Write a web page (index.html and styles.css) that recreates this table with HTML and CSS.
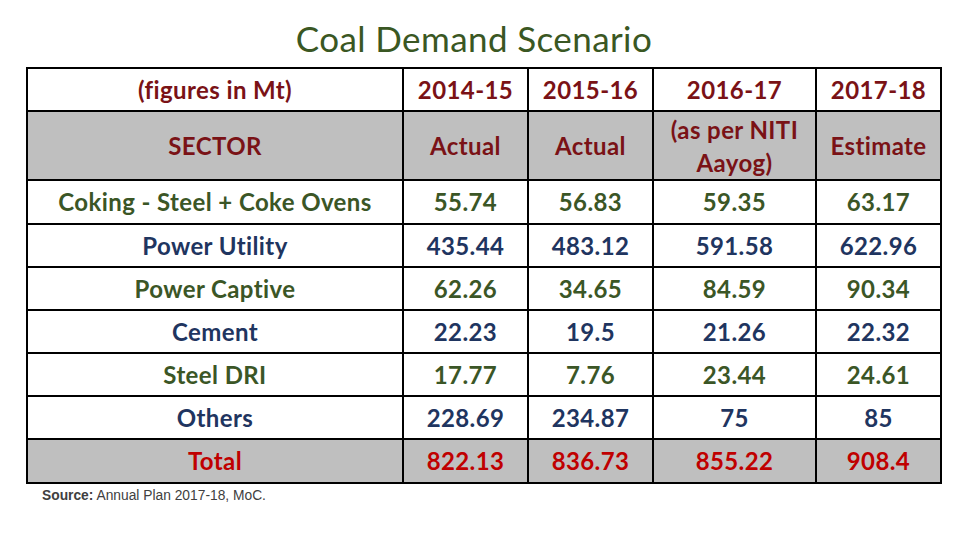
FILE: index.html
```html
<!DOCTYPE html>
<html>
<head>
<meta charset="utf-8">
<link rel="stylesheet" href="styles.css">
</head>
<body>
<div class="slide">
  <h1 class="title">Coal Demand Scenario</h1>
  <table class="demand">
    <tr class="r-year">
      <td class="sector">(figures in Mt)</td>
      <td>2014-15</td>
      <td>2015-16</td>
      <td>2016-17</td>
      <td>2017-18</td>
    </tr>
    <tr class="r-head">
      <td class="sector">SECTOR</td>
      <td>Actual</td>
      <td>Actual</td>
      <td class="two">(as per NITI<br>Aayog)</td>
      <td>Estimate</td>
    </tr>
    <tr class="r-green r-first">
      <td class="sector">Coking - Steel + Coke Ovens</td>
      <td>55.74</td><td>56.83</td><td>59.35</td><td>63.17</td>
    </tr>
    <tr class="r-navy">
      <td class="sector">Power Utility</td>
      <td>435.44</td><td>483.12</td><td>591.58</td><td>622.96</td>
    </tr>
    <tr class="r-green">
      <td class="sector">Power Captive</td>
      <td>62.26</td><td>34.65</td><td>84.59</td><td>90.34</td>
    </tr>
    <tr class="r-navy">
      <td class="sector">Cement</td>
      <td>22.23</td><td>19.5</td><td>21.26</td><td>22.32</td>
    </tr>
    <tr class="r-green">
      <td class="sector">Steel DRI</td>
      <td>17.77</td><td>7.76</td><td>23.44</td><td>24.61</td>
    </tr>
    <tr class="r-navy">
      <td class="sector">Others</td>
      <td>228.69</td><td>234.87</td><td>75</td><td>85</td>
    </tr>
    <tr class="r-total">
      <td class="sector">Total</td>
      <td>822.13</td><td>836.73</td><td>855.22</td><td>908.4</td>
    </tr>
  </table>
  <p class="source"><b>Source:</b> Annual Plan 2017-18, MoC.</p>
</div>
</body>
</html>
```

FILE: styles.css
```css
html, body {
  margin: 0;
  padding: 0;
  background: #ffffff;
}

.slide {
  width: 960px;
  height: 540px;
  padding: 0 0 0 26px;
  box-sizing: border-box;
}

.title {
  margin: 0;
  height: 67px;
  width: 896px;
  box-sizing: border-box;
  padding-top: 20px;
  text-align: center;
  font-family: Lato, "Liberation Sans", sans-serif;
  font-weight: 400;
  font-size: 35px;
  line-height: 36px;
  color: #3a5723;
  letter-spacing: 0.4px;
}

.demand {
  border-collapse: collapse;
  width: 913px;
  table-layout: fixed;
  font-family: Lato, "Liberation Sans", sans-serif;
  font-weight: 700;
  font-size: 24px;
  letter-spacing: 0.4px;
}

.demand td {
  border: 2px solid #000000;
  padding: 0;
  text-align: center;
  vertical-align: middle;
  line-height: 28px;
  height: 41px;
  width: 123px;
  white-space: nowrap;
}

.demand td.sector {
  width: 374px;
}

.demand td:nth-child(4) {
  width: 161px;
}

.r-year td {
  color: #7a1216;
  background: #ffffff;
}

.r-head td {
  color: #7a1216;
  background: #bfbfbf;
  height: 67px;
}

.r-head td.two {
  line-height: 33px;
}

.r-green td {
  color: #3b5626;
}

.r-navy td {
  color: #1f3560;
}

.r-first td {
  height: 42px;
}

.r-total td {
  color: #c00000;
  background: #bfbfbf;
  height: 42px;
}

.source {
  margin: 4px 0 0 16px;
  font-family: "Liberation Sans", Arial, sans-serif;
  font-size: 13.8px;
  color: #404040;
}

.source b {
  color: #404040;
}
```
